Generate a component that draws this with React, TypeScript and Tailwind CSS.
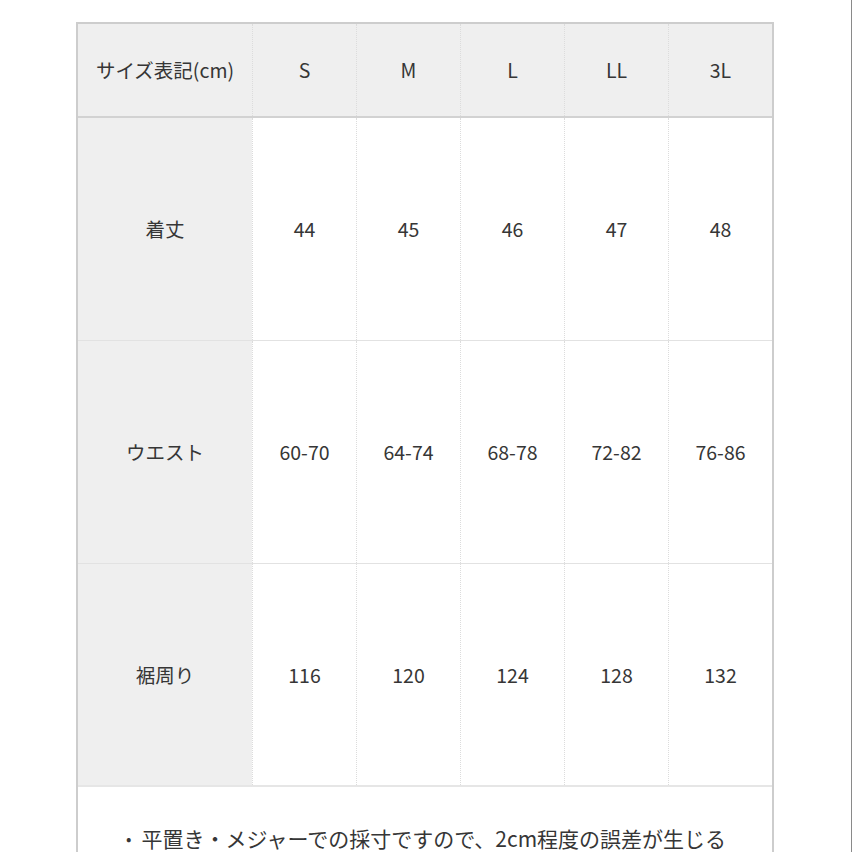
const sizes = ['S', 'M', 'L', 'LL', '3L'];

const rows = [
  { label: '着丈', values: ['44', '45', '46', '47', '48'] },
  { label: 'ウエスト', values: ['60-70', '64-74', '68-78', '72-82', '76-86'] },
  { label: '裾周り', values: ['116', '120', '124', '128', '132'] },
];

const font = { fontFamily: '"Noto Sans CJK JP", "Noto Sans", "Liberation Sans", sans-serif' };

export default function App() {
  return (
    <div
      className="w-[852px] h-[852px] overflow-hidden bg-white border-r border-[#8a8a8a] pl-[76px] pt-[22px] text-[#363636]"
      style={font}
    >
      <div className="w-[698px] h-[860px] border-2 border-[#cdcdcd] border-b-0 flex flex-col">
        {/* header */}
        <div className="grid grid-cols-[174px_repeat(5,104px)] h-[94px] bg-[#efefef] border-b-2 border-[#d2d2d2]">
          <div className="flex items-center justify-center text-[19.5px]">サイズ表記(cm)</div>
          {sizes.map((s) => (
            <div
              key={s}
              className="flex items-center justify-center text-[19.5px] border-l border-dotted border-[#dcdcdc]"
            >
              {s}
            </div>
          ))}
        </div>

        {/* body rows */}
        {rows.map((r, i) => (
          <div
            key={r.label}
            className={`grid grid-cols-[174px_repeat(5,104px)] h-[223px] ${i < rows.length - 1 ? 'border-b border-[#e2e2e2]' : 'border-b-2 border-[#e6e6e6]'}`}
          >
            <div className="flex items-center justify-center bg-[#efefef] text-[19.5px]">{r.label}</div>
            {r.values.map((v, j) => (
              <div
                key={j}
                className="flex items-center justify-center text-[19.5px] border-l border-dotted border-[#dcdcdc]"
              >
                {v}
              </div>
            ))}
          </div>
        ))}

        {/* note */}
        <div className="flex items-start pt-[36px] pl-[48px] text-[21px] whitespace-nowrap">
          <span className="mr-[10px] text-[16px] leading-[30px]">•</span>
          <span className="leading-[30px]">平置き・メジャーでの採寸ですので、2cm程度の誤差が生じる</span>
        </div>
      </div>
    </div>
  );
}
